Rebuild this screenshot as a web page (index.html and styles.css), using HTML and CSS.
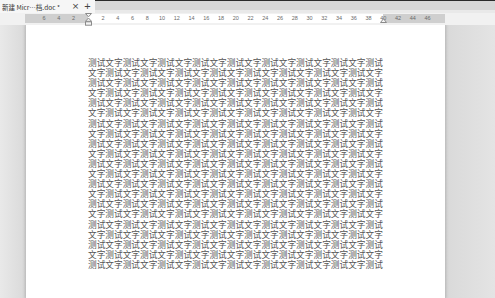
FILE: index.html
```html
<!DOCTYPE html>
<html lang="zh">
<head>
<meta charset="utf-8">
<title>新建 Microsoft Word 文档.doc</title>
<link rel="stylesheet" href="styles.css">
</head>
<body>
<div class="app">
  <div class="tabbar">
    <div class="tab">
      <span class="tab-title">新建 Micr…档.doc *</span>
      <span class="tab-close">×</span>
      <span class="tab-add">+</span>
    </div>
    <div class="tab-fill"></div>
  </div>
  <div class="ruler-row">
    <div class="ruler">
      <span class="rl"></span><span class="rl">6</span><span class="rl">4</span><span class="rl">2</span><span class="rl"></span>
      <span class="rl">2</span><span class="rl">4</span><span class="rl">6</span><span class="rl">8</span><span class="rl">10</span>
      <span class="rl">12</span><span class="rl">14</span><span class="rl">16</span><span class="rl">18</span><span class="rl">20</span>
      <span class="rl">22</span><span class="rl">24</span><span class="rl">26</span><span class="rl">28</span><span class="rl">30</span>
      <span class="rl">32</span><span class="rl">34</span><span class="rl">36</span><span class="rl">38</span><span class="rl">40</span>
      <span class="rl">42</span><span class="rl">44</span><span class="rl">46</span>
    </div>
    <svg class="marker marker-left" width="7" height="13" viewBox="0 0 7 13">
      <path d="M0.5 0.5 H6.5 L3.5 3.8 Z" fill="#f4f4f4" stroke="#8a8a8a" stroke-width="1"/>
      <path d="M3.5 5 L6.5 8.3 H0.5 Z" fill="#f4f4f4" stroke="#8a8a8a" stroke-width="1"/>
      <rect x="0.5" y="8.8" width="6" height="3.4" fill="#f4f4f4" stroke="#8a8a8a" stroke-width="1"/>
    </svg>
    <svg class="marker marker-right" width="7" height="7" viewBox="0 0 7 7">
      <path d="M3.5 0.8 L6.5 4.5 H0.5 Z" fill="#f4f4f4" stroke="#8a8a8a" stroke-width="1"/>
    </svg>
  </div>
  <div class="desk">
    <div class="page">
      <p class="body-text">
        <span class="ln">测试文字测试文字测试文字测试文字测试文字测试文字测试文字测试文字测试</span>
        <span class="ln">文字测试文字测试文字测试文字测试文字测试文字测试文字测试文字测试文字</span>
        <span class="ln">测试文字测试文字测试文字测试文字测试文字测试文字测试文字测试文字测试</span>
        <span class="ln">文字测试文字测试文字测试文字测试文字测试文字测试文字测试文字测试文字</span>
        <span class="ln">测试文字测试文字测试文字测试文字测试文字测试文字测试文字测试文字测试</span>
        <span class="ln">文字测试文字测试文字测试文字测试文字测试文字测试文字测试文字测试文字</span>
        <span class="ln">测试文字测试文字测试文字测试文字测试文字测试文字测试文字测试文字测试</span>
        <span class="ln">文字测试文字测试文字测试文字测试文字测试文字测试文字测试文字测试文字</span>
        <span class="ln">测试文字测试文字测试文字测试文字测试文字测试文字测试文字测试文字测试</span>
        <span class="ln">文字测试文字测试文字测试文字测试文字测试文字测试文字测试文字测试文字</span>
        <span class="ln">测试文字测试文字测试文字测试文字测试文字测试文字测试文字测试文字测试</span>
        <span class="ln">文字测试文字测试文字测试文字测试文字测试文字测试文字测试文字测试文字</span>
        <span class="ln">测试文字测试文字测试文字测试文字测试文字测试文字测试文字测试文字测试</span>
        <span class="ln">文字测试文字测试文字测试文字测试文字测试文字测试文字测试文字测试文字</span>
        <span class="ln">测试文字测试文字测试文字测试文字测试文字测试文字测试文字测试文字测试</span>
        <span class="ln">文字测试文字测试文字测试文字测试文字测试文字测试文字测试文字测试文字</span>
        <span class="ln">测试文字测试文字测试文字测试文字测试文字测试文字测试文字测试文字测试</span>
        <span class="ln">文字测试文字测试文字测试文字测试文字测试文字测试文字测试文字测试文字</span>
        <span class="ln">测试文字测试文字测试文字测试文字测试文字测试文字测试文字测试文字测试</span>
        <span class="ln">文字测试文字测试文字测试文字测试文字测试文字测试文字测试文字测试文字</span>
        <span class="ln">测试文字测试文字测试文字测试文字测试文字测试文字测试文字测试文字测试</span>
      </p>
    </div>
  </div>
</div>
</body>
</html>
```

FILE: styles.css
```css
html, body {
  margin: 0;
  padding: 0;
}

body {
  width: 495px;
  height: 298px;
  overflow: hidden;
  background: #dedede;
  font-family: "Noto Sans CJK SC", "Liberation Sans", sans-serif;
}

.app {
  display: flex;
  flex-direction: column;
  height: 298px;
}

/* ---------- tab bar ---------- */
.tabbar {
  display: flex;
  height: 13px;
  flex: none;
}

.tab {
  width: 95px;
  background: #f6f6f6;
  display: flex;
  align-items: center;
  padding-left: 2px;
  box-sizing: border-box;
  font-size: 6.5px;
  color: #333;
  white-space: nowrap;
}

.tab-title {
  width: 67px;
  overflow: hidden;
}

.tab-close {
  width: 13px;
  font-family: "DejaVu Sans", sans-serif;
  font-size: 9px;
  line-height: 11px;
  color: #444;
  text-align: center;
}

.tab-add {
  width: 11px;
  font-family: "Liberation Sans", sans-serif;
  font-size: 11px;
  color: #444;
  text-align: center;
  line-height: 11px;
}

.tab-fill {
  flex: 1;
  background: linear-gradient(#d7d7d7 0 9px, #e9e9e9 9px);
  border-top: 1px solid #2a2a2a;
}

/* ---------- ruler ---------- */
.ruler-row {
  position: relative;
  height: 12px;
  flex: none;
  background: #f1f1f1;
}

.ruler {
  margin-top: 1px;
  height: 9px;
  padding-left: 21.875px;
  display: flex;
  background: linear-gradient(to right,
    transparent 0 25px,
    #cfcfcf 25px 88px,
    #ffffff 88px 383px,
    #cfcfcf 383px 445px,
    transparent 445px);
}

.rl {
  width: 14.75px;
  flex: none;
  text-align: center;
  font-family: "Liberation Sans", sans-serif;
  font-size: 5.5px;
  line-height: 9px;
  color: #6a6a6a;
}

.marker {
  position: absolute;
  display: block;
}

.marker-left {
  left: 85px;
  top: 0;
}

.marker-right {
  left: 380px;
  top: 5px;
}

/* ---------- document ---------- */
.desk {
  flex: 1;
  display: flex;
  padding-left: 26px;
  background: linear-gradient(to right, #e9e9e9 0, #d9d9d9 26px, #d9d9d9 445px, #e4e4e4 495px);
  overflow: hidden;
}

.page {
  width: 419px;
  box-sizing: border-box;
  background: #ffffff;
  box-shadow: 0 0 3px 1px rgba(0, 0, 0, 0.18);
  padding: 32px 0 0 62px;
}

.body-text {
  margin: 0;
  width: 296px;
  font-size: 8.68px;
  line-height: 10.1px;
  color: #545454;
}

.ln {
  display: block;
  white-space: nowrap;
}
```
